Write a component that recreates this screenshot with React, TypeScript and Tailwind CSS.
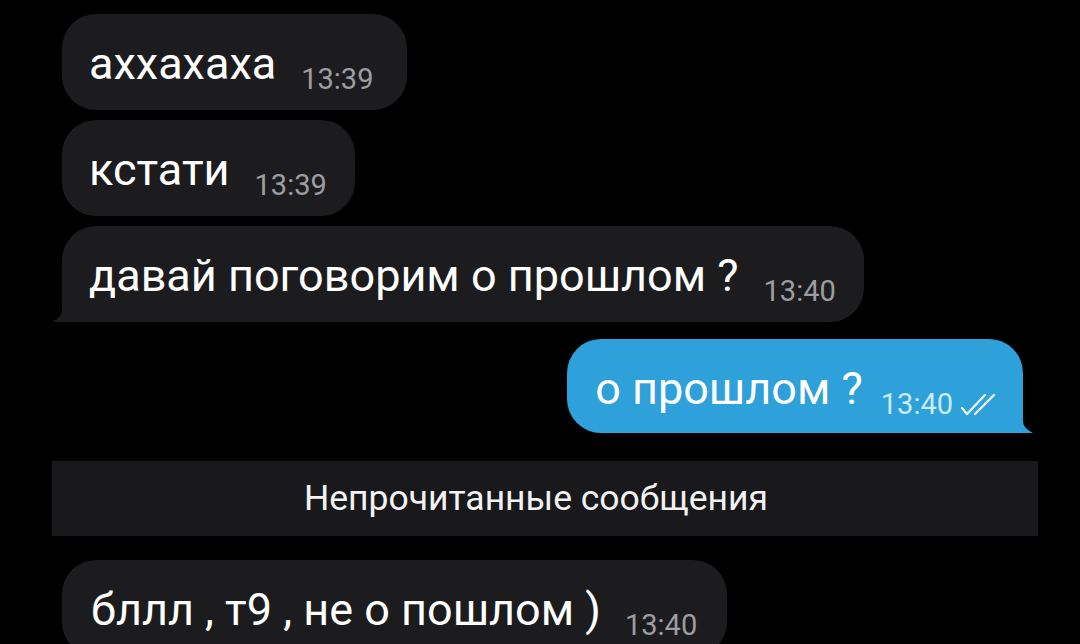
import React from 'react';

const font = { fontFamily: 'Roboto, "Noto Sans", sans-serif' };

type Msg = { text: string; time: string; tail?: boolean; wide?: boolean };

const incoming: Msg[] = [
  { text: 'аххахаха', time: '13:39', wide: true },
  { text: 'кстати', time: '13:39' },
  { text: 'давай поговорим о прошлом ?', time: '13:40', tail: true },
];

const TailLeft = ({ color }: { color: string }) => (
  <svg className="absolute -left-[10px] bottom-0" width="22" height="26" viewBox="0 0 22 26">
    <path d="M10 0 V14 C10 19 6 23 0 26 H22 V0 Z" fill={color} />
  </svg>
);

const TailRight = ({ color }: { color: string }) => (
  <svg className="absolute -right-[10px] bottom-0" width="22" height="26" viewBox="0 0 22 26">
    <path d="M12 0 V14 C12 19 16 23 22 26 H0 V0 Z" fill={color} />
  </svg>
);

const ReadChecks = () => (
  <svg width="38" height="26" viewBox="0 0 38 26" fill="none" stroke="#e4f5ff" strokeWidth="2.4" strokeLinecap="round" strokeLinejoin="round">
    <path d="M3 16 L8 22 L26 3" />
    <path d="M16 22 L35 3" />
  </svg>
);

const Bubble = ({ m }: { m: Msg }) => (
  <div
    className={`relative flex h-[96px] items-baseline self-start bg-[#1c1c1e] pl-[27px] pt-[22px] ${
      m.wide ? 'pr-[34px]' : 'pr-[28px]'
    } ${m.tail ? 'rounded-[34px] rounded-bl-[6px]' : 'rounded-[34px]'}`}
  >
    <span className="text-[45px] leading-[56px] text-white">{m.text}</span>
    <span className="ml-[25px] translate-y-[10px] text-[29px] leading-none text-[#9d9da1]">{m.time}</span>
    {m.tail && <TailLeft color="#1c1c1e" />}
  </div>
);

export default function App() {
  return (
    <div className="h-[644px] w-[1080px] overflow-hidden bg-black" style={font}>
      <div className="flex flex-col pt-[14px]">
        <div className="flex flex-col gap-[10px] px-[62px]">
          {incoming.map((m, i) => (
            <Bubble key={i} m={m} />
          ))}
        </div>

        <div className="mt-[17px] flex justify-end pr-[57px]">
          <div className="relative flex h-[94px] items-baseline rounded-[34px] rounded-br-[6px] bg-[#2ea0da] pl-[28px] pr-[26px] pt-[22px]">
            <span className="text-[45px] leading-[56px] text-white">о прошлом ?</span>
            <span className="ml-[18px] flex translate-y-[10px] items-center gap-[6px] text-[29px] leading-none text-[#c9ebfd]">
              13:40
              <ReadChecks />
            </span>
            <TailRight color="#2ea0da" />
          </div>
        </div>

        <div className="ml-[52px] mr-[42px] mt-[28px] flex h-[75px] items-center justify-center bg-[#19191c]">
          <span className="mr-[18px] text-[35.5px] text-[#f2f2f2]">Непрочитанные сообщения</span>
        </div>

        <div className="mt-[24px] px-[62px]">
          <div className="relative flex h-[96px] w-fit items-baseline rounded-[34px] bg-[#1c1c1e] pl-[29px] pr-[30px] pt-[22px]">
            <span className="text-[45px] leading-[56px] text-white">бллл , т9 , не о пошлом )</span>
            <span className="ml-[24px] translate-y-[10px] text-[29px] leading-none text-[#9d9da1]">13:40</span>
          </div>
        </div>
      </div>
    </div>
  );
}
